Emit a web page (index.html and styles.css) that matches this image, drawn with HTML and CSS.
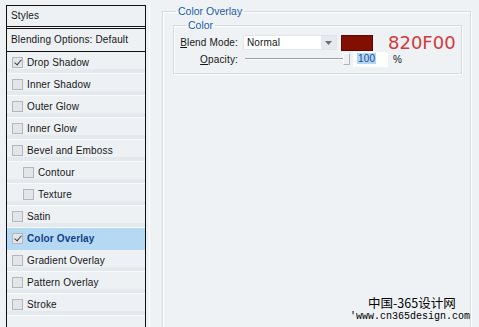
FILE: index.html
```html
<!DOCTYPE html>
<html lang="en">
<head>
    <meta charset="UTF-8">
    <title>Layer Style - Color Overlay</title>
    <link rel="stylesheet" href="styles.css">
</head>
<body>
    <div class="dialog">
        <div class="styles-panel">
            <div class="panel-title">Styles</div>
            <div class="panel-blend">Blending Options: Default</div>
            <ul class="effects">
                <li><span class="check checked"></span>Drop Shadow</li>
                <li><span class="check"></span>Inner Shadow</li>
                <li><span class="check"></span>Outer Glow</li>
                <li><span class="check"></span>Inner Glow</li>
                <li><span class="check"></span>Bevel and Emboss</li>
                <li class="sub"><span class="check"></span>Contour</li>
                <li class="sub"><span class="check"></span>Texture</li>
                <li><span class="check"></span>Satin</li>
                <li class="active"><span class="check checked"></span>Color Overlay</li>
                <li><span class="check"></span>Gradient Overlay</li>
                <li><span class="check"></span>Pattern Overlay</li>
                <li><span class="check"></span>Stroke</li>
                <li class="empty"></li>
            </ul>
        </div>

        <div class="gutter"></div>

        <div class="settings">
            <fieldset class="group outer">
                <legend>Color Overlay</legend>
                <fieldset class="group inner">
                    <legend>Color</legend>
                    <div class="row">
                        <label class="field-label"><u>B</u>lend Mode:</label>
                        <div class="select">
                            <span class="select-value">Normal</span>
                            <span class="select-arrow">
                                <svg width="7" height="4" viewBox="0 0 7 4"><path d="M0 0h7L3.5 4z" fill="#6b7078"/></svg>
                            </span>
                        </div>
                        <div class="swatch"></div>
                        <span class="hex">820F00</span>
                    </div>
                    <div class="row">
                        <label class="field-label"><u>O</u>pacity:</label>
                        <div class="slider">
                            <div class="track"></div>
                            <div class="thumb"></div>
                        </div>
                        <div class="num"><span class="sel">100</span></div>
                        <span class="unit">%</span>
                    </div>
                </fieldset>
            </fieldset>

            <div class="watermark">
                <div class="wm-cn">中国-365设计网</div>
                <div class="wm-url">'www.cn365design.com</div>
            </div>
        </div>
    </div>
</body>
</html>
```

FILE: styles.css
```css
* {
    box-sizing: border-box;
}
body {
    margin: 0;
    width: 479px;
    height: 327px;
    overflow: hidden;
    background-color: #eef2f5;
    font-family: "Liberation Sans", Arial, sans-serif;
    font-size: 10px;
    letter-spacing: 0.15px;
    color: #161616;
}
.dialog {
    display: flex;
    height: 327px;
    padding: 5px 0 0 6px;
}

/* left list */
.styles-panel {
    width: 140px;
    border: 1px solid #111;
    border-bottom: none;
    background-color: #edf1f4;
    display: flex;
    flex-direction: column;
}
.panel-title {
    height: 22px;
    line-height: 20px;
    padding-left: 4px;
    border-bottom: 1px solid #111;
}
.panel-blend {
    height: 25px;
    line-height: 22px;
    padding-left: 4px;
    border-top: 2px solid #f6f8fa;
    border-bottom: 1px solid #111;
    position: relative;
}
.panel-blend::before {
    content: "";
    position: absolute;
    left: 0;
    right: 0;
    top: -1px;
    border-top: 1px solid #111;
}
.effects {
    list-style: none;
    margin: 0;
    padding: 0;
    flex-grow: 1;
}
.effects li {
    height: 22px;
    display: flex;
    align-items: center;
    padding-left: 5px;
    border-bottom: 1px solid #f7f9fb;
    background: linear-gradient(#edf1f4 0, #edf1f4 17px, #e4e9ed 17px, #e4e9ed 21px);
}
.effects li.sub {
    padding-left: 16px;
}
.effects li.active {
    background: #b6d9f3;
    border-bottom-color: #b6d9f3;
    color: #123f86;
    font-weight: bold;
}
.effects li.empty {
    background: #edf1f4;
    border: none;
}
.check {
    width: 11px;
    height: 11px;
    margin-right: 4px;
    border: 1px solid #b3b7bc;
    background-color: #e3e6e9;
    position: relative;
    flex-shrink: 0;
}
.check.checked::after {
    content: "";
    position: absolute;
    left: 3px;
    top: 0;
    width: 3px;
    height: 6px;
    border: solid #3a3d42;
    border-width: 0 1.5px 1.5px 0;
    transform: rotate(40deg);
}

/* divider between list and settings */
.gutter {
    width: 13px;
    margin-left: 3px;
    border-left: 1px solid #ffffff;
}

/* settings */
.settings {
    flex-grow: 1;
    position: relative;
    padding-right: 8px;
}
.group {
    margin: 0;
    min-width: 0;
    border: 1px solid #d4dae0;
    box-shadow: inset 1px 1px 0 #ffffff, 1px 1px 0 #ffffff;
}
.group legend {
    color: #1d5aa6;
    font-size: 10.5px;
    line-height: 12px;
    padding: 0 2px;
    letter-spacing: 0;
}
.outer {
    height: 330px;
    padding: 0 8px 0 10px;
    border-bottom: none;
}
.outer > legend {
    margin-left: 3px;
}
.inner {
    margin-top: 2px;
    padding: 3px 0 5px 6px;
}
.inner > legend {
    margin-left: 6px;
}
.row {
    display: flex;
    align-items: center;
    height: 17px;
}
.field-label {
    width: 63px;
    text-align: right;
    padding-right: 5px;
}
.field-label u {
    text-decoration: underline;
}
.select {
    width: 94px;
    height: 15px;
    background-color: #ffffff;
    border: 1px solid #e2e6ea;
    display: flex;
    align-items: center;
    justify-content: space-between;
}
.select-value {
    padding-left: 3px;
}
.select-arrow {
    width: 15px;
    height: 13px;
    background-color: #e6eaee;
    display: flex;
    align-items: center;
    justify-content: center;
}
.swatch {
    width: 32px;
    height: 16px;
    margin-left: 4px;
    background-color: #820f00;
    border: 1px solid #5a0a00;
}
.hex {
    margin-left: 15px;
    margin-top: -1px;
    font-family: "DejaVu Sans", sans-serif;
    font-size: 18px;
    letter-spacing: 0;
    color: #d23a3c;
}
.slider {
    width: 110px;
    height: 15px;
    position: relative;
}
.track {
    position: absolute;
    left: 2px;
    right: 10px;
    top: 6px;
    height: 2px;
    border-top: 1px solid #9ca2a8;
    border-bottom: 1px solid #ffffff;
}
.thumb {
    position: absolute;
    right: 3px;
    top: 1px;
    width: 7px;
    height: 12px;
    background-color: #eef1f4;
    border: 1px solid #b0b5bb;
    border-top-color: #ffffff;
    border-left-color: #ffffff;
}
.num {
    width: 35px;
    height: 15px;
    background-color: #ffffff;
    padding: 1px 0 0 4px;
}
.sel {
    background-color: #b3d6f4;
    color: #1d4f8f;
    padding: 0 1px;
}
.unit {
    margin-left: 5px;
}

.watermark {
    position: absolute;
    left: 188px;
    top: 289px;
}
.wm-cn {
    font-family: "Noto Sans CJK SC", sans-serif;
    font-size: 12.5px;
    line-height: 17px;
    letter-spacing: 0;
    color: #000;
    padding-left: 18px;
}
.wm-url {
    font-family: "Liberation Mono", monospace;
    font-size: 10px;
    line-height: 12px;
    letter-spacing: 0;
    color: #000;
}
```
